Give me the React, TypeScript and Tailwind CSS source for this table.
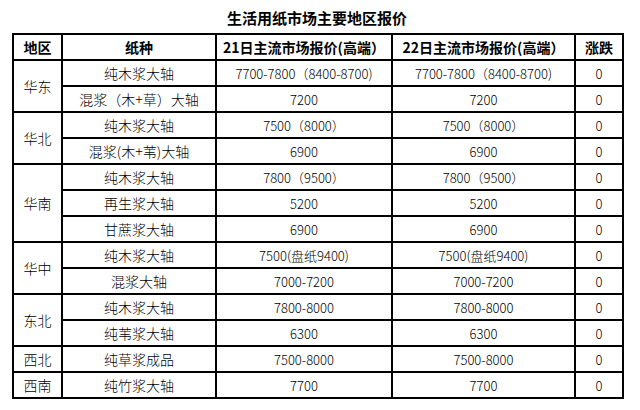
type Row = { region?: string; span?: number; kind: string; p21: string; p22: string; chg: string };

const rows: Row[] = [
  { region: "华东", span: 2, kind: "纯木浆大轴", p21: "7700-7800（8400-8700)", p22: "7700-7800（8400-8700)", chg: "0" },
  { kind: "混浆（木+草）大轴", p21: "7200", p22: "7200", chg: "0" },
  { region: "华北", span: 2, kind: "纯木浆大轴", p21: "7500（8000）", p22: "7500（8000）", chg: "0" },
  { kind: "混浆(木+苇)大轴", p21: "6900", p22: "6900", chg: "0" },
  { region: "华南", span: 3, kind: "纯木浆大轴", p21: "7800（9500）", p22: "7800（9500）", chg: "0" },
  { kind: "再生浆大轴", p21: "5200", p22: "5200", chg: "0" },
  { kind: "甘蔗浆大轴", p21: "6900", p22: "6900", chg: "0" },
  { region: "华中", span: 2, kind: "纯木浆大轴", p21: "7500(盘纸9400)", p22: "7500(盘纸9400)", chg: "0" },
  { kind: "混浆大轴", p21: "7000-7200", p22: "7000-7200", chg: "0" },
  { region: "东北", span: 2, kind: "纯木浆大轴", p21: "7800-8000", p22: "7800-8000", chg: "0" },
  { kind: "纯苇浆大轴", p21: "6300", p22: "6300", chg: "0" },
  { region: "西北", span: 1, kind: "纯草浆成品", p21: "7500-8000", p22: "7500-8000", chg: "0" },
  { region: "西南", span: 1, kind: "纯竹浆大轴", p21: "7700", p22: "7700", chg: "0" },
];

const cell = "border-2 border-black text-center align-middle p-0";

export default function App() {
  return (
    <div className="w-[640px] h-[410px] bg-white text-black font-['Noto_Sans_CJK_SC',sans-serif]">
      <div className="ml-[12px] w-[610px]">
        <div className="h-[33px] flex items-center justify-center pt-[1px] text-[15px] font-bold leading-none">
          生活用纸市场主要地区报价
        </div>
        <table className="w-[610px] border-collapse table-fixed text-[13px] leading-none font-light">
          <colgroup>
            <col className="w-[49px]" />
            <col className="w-[154px]" />
            <col className="w-[176px]" />
            <col className="w-[183px]" />
            <col className="w-[48px]" />
          </colgroup>
          <thead>
            <tr className="h-[26px] text-[14px] font-bold">
              <th className={cell}>地区</th>
              <th className={cell}>纸种</th>
              <th className={cell}>21日主流市场报价(高端）</th>
              <th className={cell}>22日主流市场报价(高端）</th>
              <th className={cell}>涨跌</th>
            </tr>
          </thead>
          <tbody>
            {rows.map((r, i) => (
              <tr key={i} className="h-[26px]">
                {r.region && (
                  <td rowSpan={r.span} className={`${cell} text-[14px]`}>
                    {r.region}
                  </td>
                )}
                <td className={`${cell} text-[14px]`}>{r.kind}</td>
                <td className={cell}>{r.p21}</td>
                <td className={cell}>{r.p22}</td>
                <td className={cell}>{r.chg}</td>
              </tr>
            ))}
          </tbody>
        </table>
      </div>
    </div>
  );
}
